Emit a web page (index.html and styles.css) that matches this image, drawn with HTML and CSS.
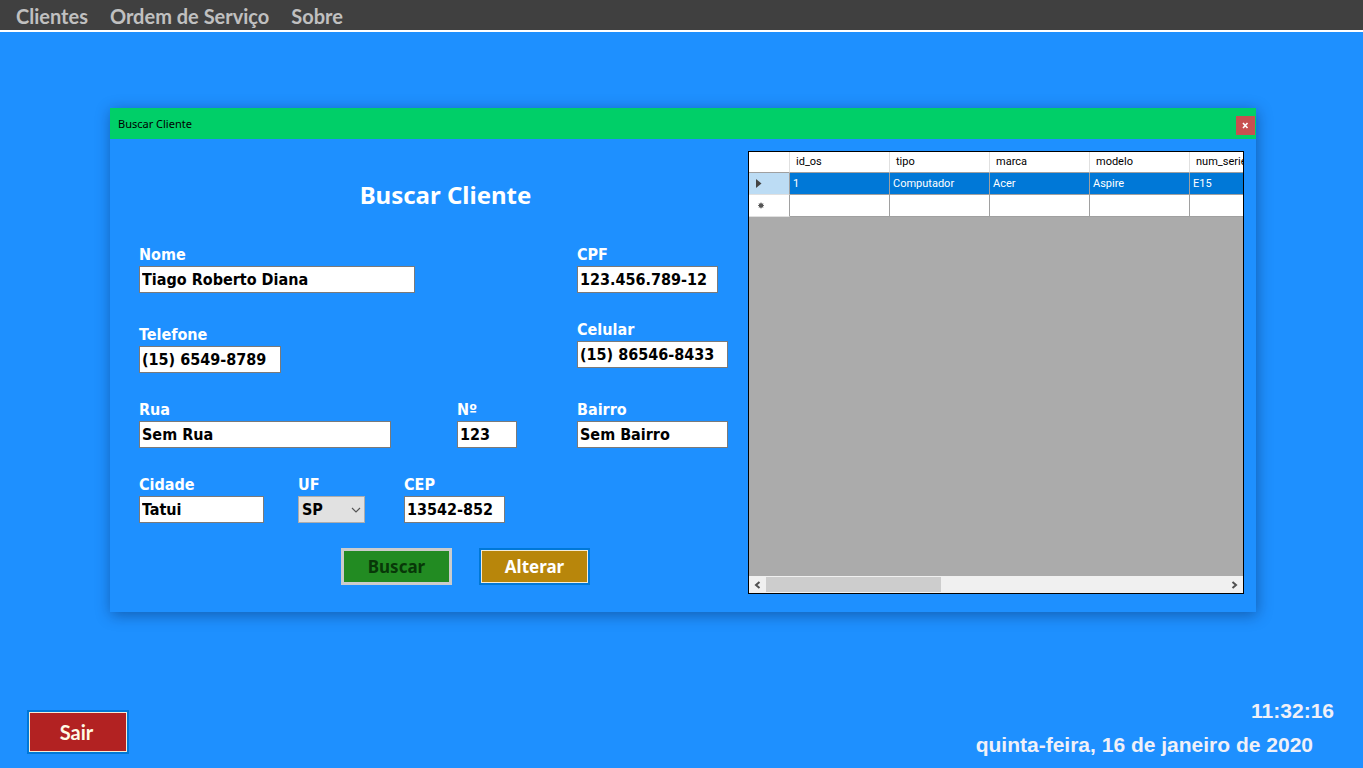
FILE: index.html
```html
<!DOCTYPE html>
<html lang="pt-BR">
<head>
<meta charset="utf-8">
<title>Buscar Cliente</title>
<link rel="stylesheet" href="styles.css">
</head>
<body>
<nav class="menu">
  <a class="menu-item" href="#">Clientes</a>
  <a class="menu-item" href="#">Ordem de Serviço</a>
  <a class="menu-item" href="#">Sobre</a>
</nav>
<main class="workspace">
  <section class="window">
    <header class="titlebar">
      <span class="titlebar-text">Buscar Cliente</span>
      <button class="close" type="button" aria-label="Fechar">
        <svg width="7" height="7" viewBox="0 0 7 7"><path d="M1 1 5.500 6M5.500 1 1 6" stroke="#fff" stroke-width="1.600" fill="none"/></svg>
      </button>
    </header>
    <div class="window-body">
      <form class="form">
        <h1 class="heading">Buscar Cliente</h1>
        <div class="fields">
          <div class="field w-nome"><label for="nome">Nome</label><input id="nome" type="text" value="Tiago Roberto Diana"></div>
          <div class="field w-cpf"><label for="cpf">CPF</label><input id="cpf" type="text" value="123.456.789-12"></div>
          <div class="field w-tel low"><label for="tel">Telefone</label><input id="tel" type="text" value="(15) 6549-8789"></div>
          <div class="field w-cel high"><label for="cel">Celular</label><input id="cel" type="text" value="(15) 86546-8433"></div>
          <div class="group spread">
            <div class="field w-rua"><label for="rua">Rua</label><input id="rua" type="text" value="Sem Rua"></div>
            <div class="field w-num"><label for="num">Nº</label><input id="num" type="text" value="123"></div>
          </div>
          <div class="field w-cel"><label for="bairro">Bairro</label><input id="bairro" type="text" value="Sem Bairro"></div>
          <div class="group">
            <div class="field w-cidade"><label for="cidade">Cidade</label><input id="cidade" type="text" value="Tatui"></div>
            <div class="field w-uf"><label for="uf">UF</label>
              <div class="select"><select id="uf"><option>SP</option></select>
                <svg class="chevron" width="10" height="6" viewBox="0 0 10 6"><path d="M1 1 5 5 9 1" fill="none" stroke="#555" stroke-width="1.200"/></svg></div>
            </div>
            <div class="field w-cep"><label for="cep">CEP</label><input id="cep" type="text" value="13542-852"></div>
          </div>
        </div>
        <div class="actions">
          <button class="btn btn-search" type="button">Buscar</button>
          <button class="btn btn-edit" type="button">Alterar</button>
        </div>
      </form>
      <section class="grid">
        <div class="grid-view">
          <table class="table">
            <colgroup><col class="col-mark"><col class="col"><col class="col"><col class="col"><col class="col"><col class="col"></colgroup>
            <thead><tr><th></th><th>id_os</th><th>tipo</th><th>marca</th><th>modelo</th><th>num_serie</th></tr></thead>
            <tbody>
              <tr class="selected"><td class="mark"><svg width="6" height="9" viewBox="0 0 6 9"><path d="M0 0 5.500 4.500 0 9Z" fill="#444"/></svg></td><td>1</td><td>Computador</td><td>Acer</td><td>Aspire</td><td>E15</td></tr>
              <tr><td class="mark"><svg width="9" height="7" viewBox="0 0 9 7"><circle cx="5" cy="3.500" r="2.300" fill="#555"/><path d="M5 .5v6M2 3.500h6M3 1.500l4 4M7 1.500l-4 4" stroke="#555" stroke-width=".8"/></svg></td><td></td><td></td><td></td><td></td><td></td></tr>
            </tbody>
          </table>
        </div>
        <div class="scrollbar">
          <button class="arrow" type="button" aria-label="Rolar para a esquerda"><svg width="7" height="8" viewBox="0 0 7 8"><path d="M5.500 1 2 4 5.500 7" fill="none" stroke="#505050" stroke-width="2"/></svg></button>
          <div class="track"><div class="thumb"></div></div>
          <button class="arrow" type="button" aria-label="Rolar para a direita"><svg width="7" height="8" viewBox="0 0 7 8"><path d="M1.500 1 5 4 1.500 7" fill="none" stroke="#505050" stroke-width="2"/></svg></button>
        </div>
      </section>
    </div>
  </section>
</main>
<footer class="footer">
  <button class="exit" type="button">Sair</button>
  <div class="clock">
    <time class="hour">11:32:16</time>
    <time class="date">quinta-feira, 16 de janeiro de 2020</time>
  </div>
</footer>
</body>
</html>
```
FILE: styles.css
```css
* { box-sizing: border-box; }
body {
  margin: 0;
  min-height: 100vh;
  display: flex;
  flex-direction: column;
  background: #1e90ff;
  font-family: "Noto Sans", sans-serif;
}
button { font: inherit; cursor: pointer; }

.menu {
  display: flex;
  gap: 22px;
  height: 32px;
  padding: 0 16px;
  background: #404040;
  border-bottom: 2px solid #fff;
}
.menu-item {
  color: #c0c0c0;
  font: bold 20px/32px "Lato", sans-serif;
  text-decoration: none;
}

.workspace { flex: 1; padding: 76px 107px 0 110px; }
.window {
  background: #1e90ff;
  box-shadow: 1px 3px 14px rgba(0, 20, 60, .4);
}
.titlebar {
  display: flex;
  justify-content: space-between;
  height: 31px;
  padding: 0 1px 0 8px;
  background: #00cf68;
  color: #000;
  font-size: 11px;
  line-height: 31px;
}
.close {
  display: flex;
  align-items: center;
  justify-content: center;
  width: 19px;
  height: 19px;
  margin-top: 8px;
  padding: 0;
  border: 0;
  background: #c75050;
}
.window-body { display: flex; padding: 12px 12px 18px 0; }

.form { flex: 1; padding: 0 20px 0 29px; }
.heading {
  margin: 26px 0 31px 24px;
  color: #fff;
  font-size: 24px;
  line-height: 35px;
  text-align: center;
}
.fields {
  display: grid;
  grid-template-columns: 1fr 151px;
  column-gap: 60px;
  row-gap: 25px;
  justify-items: start;
}
.field { display: flex; flex-direction: column; }
.field label {
  color: #fff;
  font: bold 16px/23px "DejaVu Sans Condensed", "Noto Sans", sans-serif;
}
.field input,
.field select {
  width: 100%;
  height: 27px;
  padding: 0 2px;
  border: 1px solid #7a7a7a;
  border-radius: 0;
  background: #fff;
  color: #000;
  font: bold 16px/25px "DejaVu Sans Condensed", "Noto Sans", sans-serif;
}
.low { margin-top: 5px; }
.high { margin-bottom: 5px; }
.w-nome { width: 276px; }
.w-cpf { width: 141px; }
.w-tel { width: 142px; }
.w-cel { width: 151px; }
.w-rua { width: 252px; }
.w-num { width: 60px; }
.w-cidade { width: 125px; }
.w-uf { width: 67px; margin: 0 39px 0 34px; }
.w-cep { width: 101px; }
.group { display: flex; width: 100%; }
.spread { justify-content: space-between; }
.select { position: relative; height: 27px; }
.field select {
  appearance: none;
  background: #e1e1e1;
  border-color: #adadad;
  padding: 0 3px;
}
.chevron { position: absolute; right: 4px; top: 11px; pointer-events: none; }

.actions {
  display: flex;
  justify-content: center;
  gap: 27px;
  margin: 25px 0 9px 64px;
}
.btn {
  width: 111px;
  height: 37px;
  padding: 0;
  font-size: 17px;
  font-weight: bold;
}
.btn-search { border: 3px solid #ccc; background: #228b22; color: #083808; }
.btn-edit,
.exit {
  border: 2px solid #0078d7;
  box-shadow: inset 0 0 0 1px #f5ecd8;
}
.btn-edit { background: #b8860b; color: #fff; }

.grid {
  display: flex;
  flex-direction: column;
  width: 496px;
  border: 1px solid #000;
  background: #ababab;
  overflow: hidden;
}
.grid-view { flex: 1; overflow: hidden; }
.table {
  width: 541px;
  table-layout: fixed;
  border-collapse: separate;
  border-spacing: 0;
  background: #fff;
  font: 11px/20px "Roboto", "Liberation Sans", sans-serif;
}
.col-mark { width: 41px; }
.col { width: 100px; }
.table th {
  height: 21px;
  padding: 0 6px;
  border-right: 1px solid #e0e0e0;
  border-bottom: 1px solid #a0a0a0;
  font-weight: normal;
  text-align: left;
}
.table td {
  height: 22px;
  padding: 0 3px;
  border-right: 1px solid #a0a0a0;
  border-bottom: 1px solid #a0a0a0;
}
.table .mark { padding: 0 7px; border-bottom-color: #e0e0e0; }
.mark svg { display: block; }
.selected td { background: #0078d7; color: #fff; }
.selected .mark { background: #bcdcf4; }
.scrollbar { display: flex; height: 17px; background: #f0f0f0; }
.arrow {
  display: flex;
  align-items: center;
  justify-content: center;
  width: 17px;
  padding: 0;
  border: 0;
  background: #f0f0f0;
}
.track { flex: 1; padding: 1px 0; }
.thumb { width: 38%; height: 100%; background: #cdcdcd; }

.footer {
  display: flex;
  justify-content: space-between;
  align-items: flex-end;
  padding: 0 29px 10px 27px;
}
.exit {
  width: 102px;
  height: 44px;
  margin-bottom: 4px;
  padding: 0 3px 0 0;
  background: #b22222;
  color: #fffbe6;
  font: bold 20px/24px "Lato", sans-serif;
}
.clock {
  display: flex;
  flex-direction: column;
  gap: 8px;
  color: #f0f0f8;
  font: bold 21px/26px "Liberation Sans", Arial, sans-serif;
}
.hour { text-align: right; }
.date { margin-right: 21px; }
```
